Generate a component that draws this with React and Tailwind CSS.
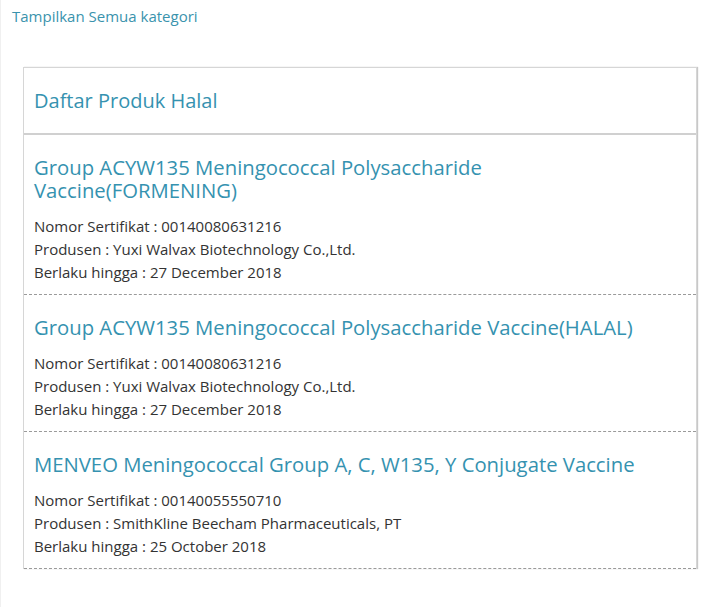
export default function App() {
  const items = [
    {
      title: "Group ACYW135 Meningococcal Polysaccharide Vaccine(FORMENING)",
      no: "00140080631216",
      prod: "Yuxi Walvax Biotechnology Co.,Ltd.",
      date: "27 December 2018",
    },
    {
      title: "Group ACYW135 Meningococcal Polysaccharide Vaccine(HALAL)",
      no: "00140080631216",
      prod: "Yuxi Walvax Biotechnology Co.,Ltd.",
      date: "27 December 2018",
    },
    {
      title: "MENVEO Meningococcal Group A, C, W135, Y Conjugate Vaccine",
      no: "00140055550710",
      prod: "SmithKline Beecham Pharmaceuticals, PT",
      date: "25 October 2018",
    },
  ];
  return (
    <div className="min-h-[607px] bg-white border-l border-[#f0f0f0] font-['Open_Sans',sans-serif] text-[#333]">
      <div className="pl-[11px] pt-[6px] text-[15px] leading-[20px] text-[#3a93ad]">Tampilkan Semua kategori</div>
      <div className="ml-[22px] mt-[41px] w-[674px] border border-[#d6d6d6] border-b-0 shadow-[1px_0_1px_#c8c8c8]">
        <div className="h-[67px] flex items-center pl-[10px] text-[20px] text-[#3592b0] border-b-2 border-[#d0d0d0]">
          Daftar Produk Halal
        </div>
        {items.map((it, i) => (
          <div key={i} className="pl-[10px] pr-[30px] pt-[21px] pb-[10px] border-b border-dashed border-[#9a9a9a]">
            <div className="text-[20.3px] leading-[23px] text-[#3592b0]">{it.title}</div>
            <div className="mt-[13px] text-[15px] leading-[23px] text-[#333]">
              <div>Nomor Sertifikat : {it.no}</div>
              <div>Produsen : {it.prod}</div>
              <div>Berlaku hingga : {it.date}</div>
            </div>
          </div>
        ))}
      </div>
    </div>
  );
}
